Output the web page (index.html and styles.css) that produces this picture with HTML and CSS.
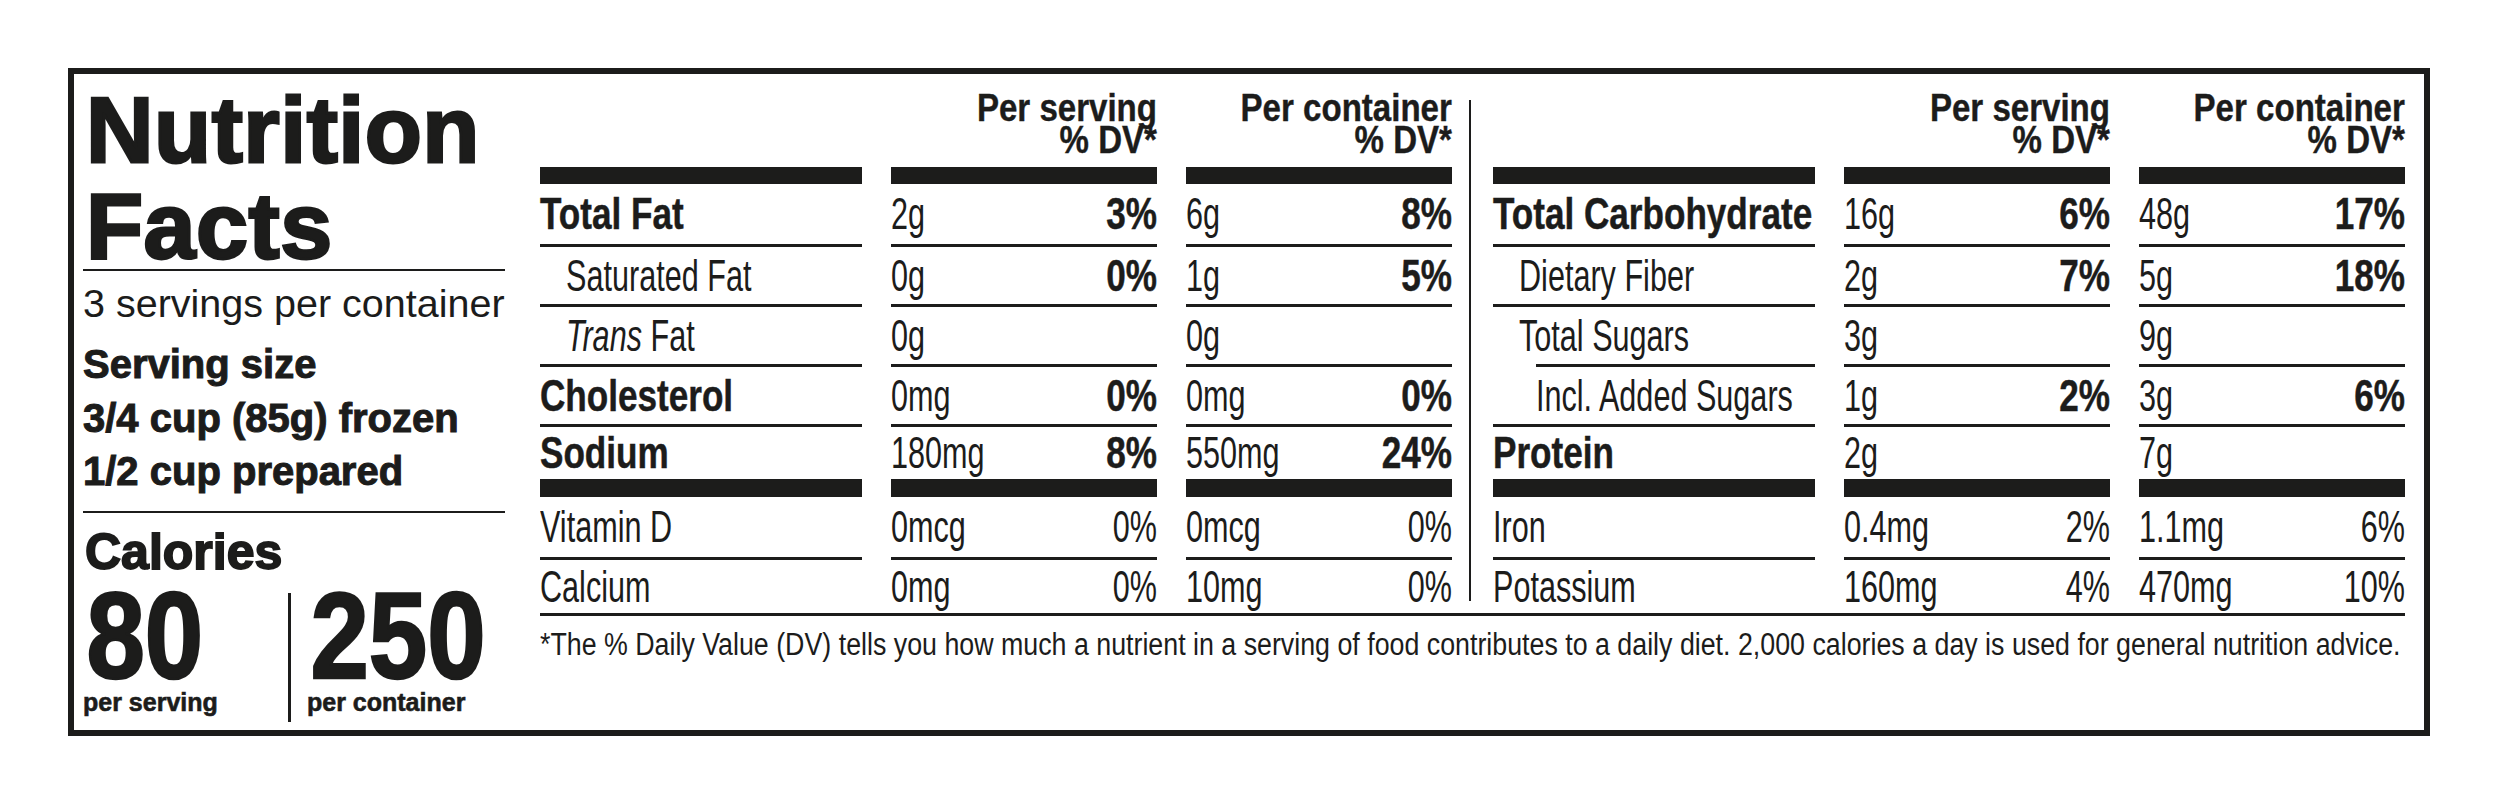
FILE: index.html
```html
<!DOCTYPE html>
<html lang="en">
<head>
<meta charset="utf-8">
<title>Nutrition Facts</title>
<link rel="stylesheet" href="styles.css">
</head>
<body>
<div class="label">
  <section class="facts">
    <h1 class="title">Nutrition<br>Facts</h1>
    <div class="rule"></div>
    <p class="servings">3 servings per container</p>
    <p class="size">Serving size<br>3/4 cup (85g) frozen<br>1/2 cup prepared</p>
    <div class="rule"></div>
    <p class="cal-label">Calories</p>
    <div class="cal-row">
      <div class="cal-col">
        <span class="cal-num">80</span>
        <span class="cal-unit">per serving</span>
      </div>
      <div class="cal-sep"></div>
      <div class="cal-col cal-col2">
        <span class="cal-num">250</span>
        <span class="cal-unit">per container</span>
      </div>
    </div>
  </section>

  <section class="table-area">
    <div class="halves">
      <div class="half">
        <div class="hd"></div>
        <div class="hd"><span class="t h">Per serving</span><span class="t h">% DV*</span></div>
        <div class="hd"><span class="t h">Per container</span><span class="t h">% DV*</span></div>

        <div class="bar"></div><div class="bar"></div><div class="bar"></div>

        <div class="cell ln"><span class="t b">Total Fat</span></div>
        <div class="cell ln v"><span class="t r">2g</span><span class="t b p">3%</span></div>
        <div class="cell ln v"><span class="t r">6g</span><span class="t b p">8%</span></div>

        <div class="cell ln in1"><span class="t r">Saturated Fat</span></div>
        <div class="cell ln v"><span class="t r">0g</span><span class="t b p">0%</span></div>
        <div class="cell ln v"><span class="t r">1g</span><span class="t b p">5%</span></div>

        <div class="cell ln in1"><span class="t r"><i>Trans</i> Fat</span></div>
        <div class="cell ln v"><span class="t r">0g</span></div>
        <div class="cell ln v"><span class="t r">0g</span></div>

        <div class="cell ln"><span class="t b">Cholesterol</span></div>
        <div class="cell ln v"><span class="t r">0mg</span><span class="t b p">0%</span></div>
        <div class="cell ln v"><span class="t r">0mg</span><span class="t b p">0%</span></div>

        <div class="cell"><span class="t b">Sodium</span></div>
        <div class="cell v"><span class="t r">180mg</span><span class="t b p">8%</span></div>
        <div class="cell v"><span class="t r">550mg</span><span class="t b p">24%</span></div>

        <div class="bar"></div><div class="bar"></div><div class="bar"></div>

        <div class="cell ln"><span class="t r">Vitamin D</span></div>
        <div class="cell ln v"><span class="t r">0mcg</span><span class="t r p">0%</span></div>
        <div class="cell ln v"><span class="t r">0mcg</span><span class="t r p">0%</span></div>

        <div class="cell"><span class="t r">Calcium</span></div>
        <div class="cell v"><span class="t r">0mg</span><span class="t r p">0%</span></div>
        <div class="cell v"><span class="t r">10mg</span><span class="t r p">0%</span></div>
      </div>

      <div class="divider"></div>

      <div class="half">
        <div class="hd"></div>
        <div class="hd"><span class="t h">Per serving</span><span class="t h">% DV*</span></div>
        <div class="hd"><span class="t h">Per container</span><span class="t h">% DV*</span></div>

        <div class="bar"></div><div class="bar"></div><div class="bar"></div>

        <div class="cell ln"><span class="t b">Total Carbohydrate</span></div>
        <div class="cell ln v"><span class="t r">16g</span><span class="t b p">6%</span></div>
        <div class="cell ln v"><span class="t r">48g</span><span class="t b p">17%</span></div>

        <div class="cell ln in1"><span class="t r">Dietary Fiber</span></div>
        <div class="cell ln v"><span class="t r">2g</span><span class="t b p">7%</span></div>
        <div class="cell ln v"><span class="t r">5g</span><span class="t b p">18%</span></div>

        <div class="cell ln sub-ln"><span class="t r">Total Sugars</span></div>
        <div class="cell ln v"><span class="t r">3g</span></div>
        <div class="cell ln v"><span class="t r">9g</span></div>

        <div class="cell ln in2"><span class="t r">Incl. Added Sugars</span></div>
        <div class="cell ln v"><span class="t r">1g</span><span class="t b p">2%</span></div>
        <div class="cell ln v"><span class="t r">3g</span><span class="t b p">6%</span></div>

        <div class="cell"><span class="t b">Protein</span></div>
        <div class="cell v"><span class="t r">2g</span></div>
        <div class="cell v"><span class="t r">7g</span></div>

        <div class="bar"></div><div class="bar"></div><div class="bar"></div>

        <div class="cell ln"><span class="t r">Iron</span></div>
        <div class="cell ln v"><span class="t r">0.4mg</span><span class="t r p">2%</span></div>
        <div class="cell ln v"><span class="t r">1.1mg</span><span class="t r p">6%</span></div>

        <div class="cell"><span class="t r">Potassium</span></div>
        <div class="cell v"><span class="t r">160mg</span><span class="t r p">4%</span></div>
        <div class="cell v"><span class="t r">470mg</span><span class="t r p">10%</span></div>
      </div>
    </div>
    <div class="full-rule"></div>
    <p class="footnote"><span class="t fn">*The % Daily Value (DV) tells you how much a nutrient in a serving of food contributes to a daily diet. 2,000 calories a day is used for general nutrition advice.</span></p>
  </section>
</div>
</body>
</html>
```

FILE: styles.css
```css
* { box-sizing: border-box; }

html, body {
  margin: 0;
  padding: 0;
  background: #ffffff;
}

body {
  padding: 68px 0 0 68px;
  color: #1c1c1b;
  font-family: "Liberation Sans", Arial, sans-serif;
}

p, h1 { margin: 0; }

.label {
  width: 2362px;
  height: 668px;
  border: 6px solid #1c1c1b;
  display: flex;
  padding: 0 19px 0 9px;
  gap: 35px;
  overflow: hidden;
}

/* ---------- left panel ---------- */
.facts {
  width: 422px;
  flex: none;
  display: flex;
  flex-direction: column;
  padding-top: 8px;
}

.title {
  font-size: 93.5px;
  line-height: 96px;
  font-weight: 700;
  -webkit-text-stroke: 2.8px #1c1c1b;
  padding-left: 3px;
  margin-bottom: -5px;
  letter-spacing: 0.5px;
}

.rule {
  height: 2px;
  background: #1c1c1b;
}

.servings {
  margin-top: 11px;
  font-size: 39.5px;
  line-height: 42px;
}

.size {
  margin-top: 14px;
  font-size: 40px;
  line-height: 53.5px;
  font-weight: 700;
  -webkit-text-stroke: 1px #1c1c1b;
  margin-bottom: 12px;
}

.cal-label {
  margin-top: 14px;
  font-size: 50px;
  line-height: 50px;
  font-weight: 700;
  -webkit-text-stroke: 1.8px #1c1c1b;
  padding-left: 2px;
}

.cal-row {
  display: flex;
  margin-top: 9px;
}

.cal-col {
  width: 205px;
  flex: none;
  display: flex;
  flex-direction: column;
}

.cal-col2 {
  width: auto;
  padding-left: 16px;
}

.cal-num {
  font-size: 122px;
  line-height: 100px;
  font-weight: 700;
  -webkit-text-stroke: 2.5px #1c1c1b;
  display: inline-block;
  transform: scaleX(0.86);
  transform-origin: left center;
  padding-left: 4px;
}

.cal-unit {
  margin-top: 2px;
  font-size: 25px;
  line-height: 28px;
  font-weight: 700;
  -webkit-text-stroke: 0.6px #1c1c1b;
}

.cal-sep {
  width: 3px;
  height: 129px;
  margin-top: 7px;
  background: #1c1c1b;
  flex: none;
}

/* ---------- table ---------- */
.table-area {
  display: flex;
  flex-direction: column;
  width: 1865px;
  flex: none;
}

.halves {
  display: flex;
}

.half {
  display: grid;
  grid-template-columns: 322px 266px 266px;
  grid-template-rows: 93px 17px 63px 60px 60px 60px 52px 18px 63px 53px;
  column-gap: 29px;
  width: 912px;
  flex: none;
}

.divider {
  width: 2px;
  background: #1c1c1b;
  margin: 26px 22px 12px 17px;
  flex: none;
}

.hd {
  display: flex;
  flex-direction: column;
  align-items: flex-end;
  justify-content: flex-end;
  padding-bottom: 11px;
}

.bar {
  background: #1c1c1b;
}

.cell {
  display: flex;
  align-items: center;
  justify-content: space-between;
  white-space: nowrap;
}

.ln {
  border-bottom: 3px solid #1c1c1b;
}

.in1 { padding-left: 26px; }
.in2 { padding-left: 43px; }

.sub-ln {
  margin-left: 43px;
}
.sub-ln .t {
  margin-left: -17px;
}

.t {
  display: inline-block;
  white-space: nowrap;
  transform-origin: left center;
}

.b {
  font-size: 45px;
  line-height: 50px;
  font-weight: 700;
  transform: scaleX(0.78);
  -webkit-text-stroke: 0.5px #1c1c1b;
}

.r {
  font-size: 45px;
  line-height: 50px;
  font-weight: 400;
  transform: scaleX(0.68);
}

.p {
  transform-origin: right center;
}

.b.p {
  transform: scaleX(0.78);
}

.r.p {
  transform: scaleX(0.68);
}

.h {
  font-size: 38px;
  line-height: 31.5px;
  font-weight: 700;
  transform: scaleX(0.87);
  transform-origin: right center;
  -webkit-text-stroke: 0.4px #1c1c1b;
}

.full-rule {
  height: 3px;
  background: #1c1c1b;
}

.footnote {
  margin-top: 11px;
  line-height: 36px;
  white-space: nowrap;
  overflow: hidden;
}

.fn {
  font-size: 31px;
  line-height: 36px;
  transform: scaleX(0.864);
}
```
